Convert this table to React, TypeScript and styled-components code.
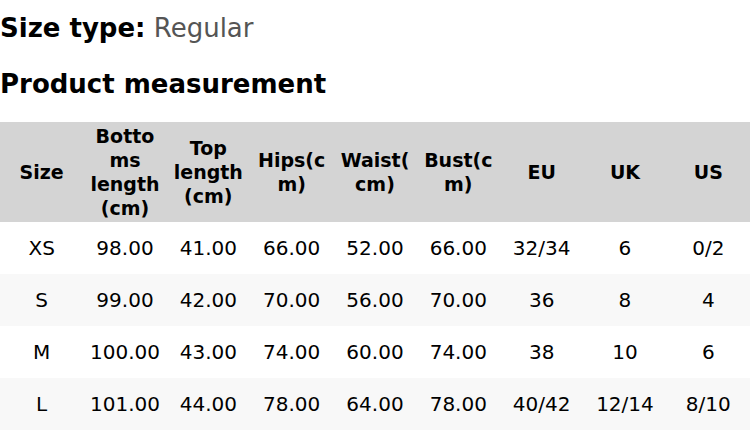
import styled, { createGlobalStyle } from 'styled-components';
import { ReactElement } from 'react';

const GlobalStyle = createGlobalStyle`
  body {
    margin: 0;
    background: #fff;
    font-family: "DejaVu Sans", sans-serif;
    color: #000;
  }
`

const Page = styled.div`
  width: 750px;
`

const SizeType = styled.div`
  font-size: 26px;
  line-height: 30px;
  padding: 13px 0 0;
  b { font-weight: bold; }
  span { color: #555; }
`

const Heading = styled.h2`
  margin: 0;
  padding: 26px 0 0;
  font-size: 26px;
  line-height: 30px;
  font-weight: bold;
`

const Table = styled.table`
  margin-top: 23px;
  width: 100%;
  border-collapse: collapse;
  table-layout: fixed;
`

const Th = styled.th`
  background: #d4d4d4;
  font-size: 19px;
  line-height: 24px;
  font-weight: bold;
  text-align: center;
  vertical-align: middle;
  padding: 2px 4px;
  height: 96px;
  overflow-wrap: anywhere;
`

const Row = styled.tr<{ $striped?: boolean }>`
  background: ${p => (p.$striped ? '#f8f8f8' : '#fff')};
`

const Td = styled.td`
  font-size: 20px;
  line-height: 24px;
  text-align: center;
  vertical-align: middle;
  height: 52px;
  padding: 0 4px;
`

const headers = ['Size', 'Bottoms length (cm)', 'Top length (cm)', 'Hips(cm)', 'Waist(cm)', 'Bust(cm)', 'EU', 'UK', 'US'];

const rows = [
  ['XS', '98.00', '41.00', '66.00', '52.00', '66.00', '32/34', '6', '0/2'],
  ['S', '99.00', '42.00', '70.00', '56.00', '70.00', '36', '8', '4'],
  ['M', '100.00', '43.00', '74.00', '60.00', '74.00', '38', '10', '6'],
  ['L', '101.00', '44.00', '78.00', '64.00', '78.00', '40/42', '12/14', '8/10'],
];

export default function App(): ReactElement {
  return (
    <Page>
      <GlobalStyle />
      <SizeType><b>Size type:</b> <span>Regular</span></SizeType>
      <Heading>Product measurement</Heading>
      <Table>
        <thead>
          <tr>
            {headers.map(h => <Th key={h}>{h}</Th>)}
          </tr>
        </thead>
        <tbody>
          {rows.map((r, i) => (
            <Row key={r[0]} $striped={i % 2 === 1}>
              {r.map((c, j) => <Td key={j}>{c}</Td>)}
            </Row>
          ))}
        </tbody>
      </Table>
    </Page>
  )
}
